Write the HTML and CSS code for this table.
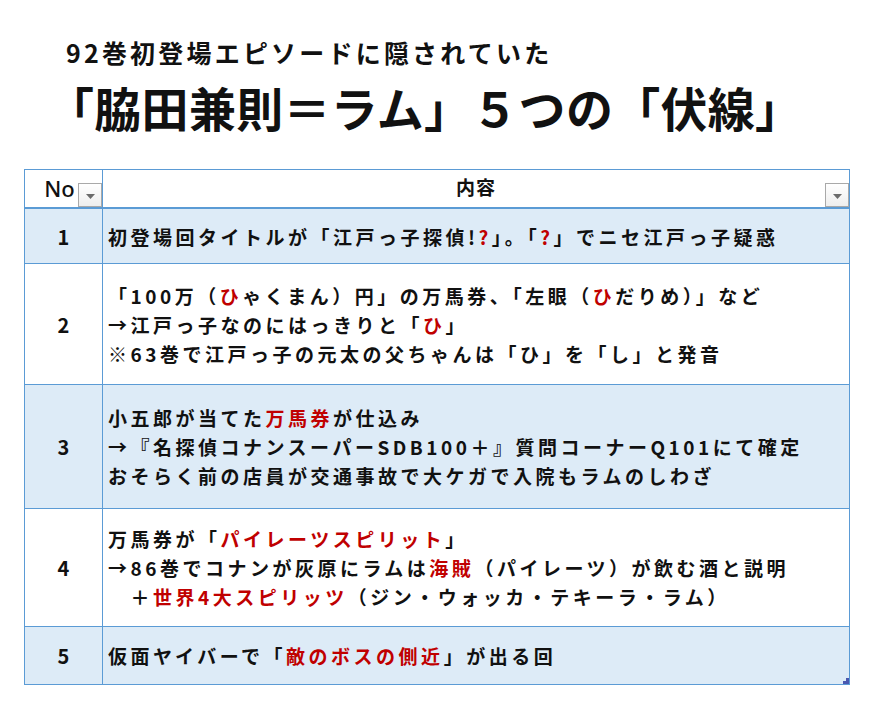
FILE: index.html
```html
<!DOCTYPE html>
<html lang="ja">
<head>
<meta charset="utf-8">
<link rel="stylesheet" href="styles.css">
</head>
<body>
<div class="page">
  <header class="titles">
    <div class="subtitle">92巻初登場エピソードに隠されていた</div>
    <h1 class="title">「脇田兼則＝ラム」５つの「伏線」</h1>
  </header>
  <div class="sheet">
    <table class="list">
      <thead>
        <tr class="head">
          <th class="c-no"><span class="no-label">No</span><span class="dd"><svg width="9" height="5" viewBox="0 0 9 5"><path d="M0 0H9L4.5 5Z" fill="#6b6b6b"/></svg></span></th>
          <th class="c-body"><span class="body-label">内容</span><span class="dd"><svg width="9" height="5" viewBox="0 0 9 5"><path d="M0 0H9L4.5 5Z" fill="#6b6b6b"/></svg></span></th>
        </tr>
      </thead>
      <tbody>
        <tr class="r1 alt">
          <td class="c-no">1</td>
          <td class="c-body">初登場回タイトルが「江戸っ子探偵!<span class="red">?</span>」。「<span class="red">?</span>」でニセ江戸っ子疑惑</td>
        </tr>
        <tr class="r2">
          <td class="c-no">2</td>
          <td class="c-body">「100万（<span class="red">ひ</span>ゃくまん）円」の万馬券、「左眼（<span class="red">ひ</span>だりめ）」など<br>→江戸っ子なのにはっきりと「<span class="red">ひ</span>」<br>※63巻で江戸っ子の元太の父ちゃんは「ひ」を「し」と発音</td>
        </tr>
        <tr class="r3 alt">
          <td class="c-no">3</td>
          <td class="c-body">小五郎が当てた<span class="red">万馬券</span>が仕込み<br>→『名探偵コナンスーパーSDB100＋』質問コーナーQ101にて確定<br>おそらく前の店員が交通事故で大ケガで入院もラムのしわざ</td>
        </tr>
        <tr class="r4">
          <td class="c-no">4</td>
          <td class="c-body">万馬券が「<span class="red">パイレーツスピリット</span>」<br>→86巻でコナンが灰原にラムは<span class="red">海賊</span>（パイレーツ）が飲む酒と説明<br>　＋<span class="red">世界4大スピリッツ</span>（ジン・ウォッカ・テキーラ・ラム）</td>
        </tr>
        <tr class="r5 alt">
          <td class="c-no">5</td>
          <td class="c-body">仮面ヤイバーで「<span class="red">敵のボスの側近</span>」が出る回</td>
        </tr>
      </tbody>
    </table>
    <svg class="grip" width="6" height="6" viewBox="0 0 6 6"><path d="M3 0H6V6H0V3H3Z" fill="#4a58b0"/></svg>
  </div>
</div>
</body>
</html>
```

FILE: styles.css
```css
html, body {
  margin: 0;
  padding: 0;
  background: #ffffff;
}

.page {
  width: 874px;
  height: 706px;
  font-family: "Noto Sans CJK JP", "Noto Sans", sans-serif;
  color: #111;
}

.titles {
  padding: 37px 0 0 66px;
  height: 169px;
  box-sizing: border-box;
}

.subtitle {
  font-size: 25px;
  font-weight: 700;
  line-height: 30px;
  letter-spacing: 3.2px;
}

.title {
  margin: 14px 0 0 -19px;
  font-size: 47px;
  font-weight: 700;
  line-height: 52px;
  letter-spacing: 0.3px;
}

.sheet {
  position: relative;
  margin-left: 24px;
  width: 826px;
}

.list {
  border-collapse: collapse;
  width: 826px;
  table-layout: fixed;
  font-size: 19px;
  font-weight: 700;
  letter-spacing: 3.5px;
}

.list td, .list th {
  border: 1px solid #5b9bd5;
  padding: 0;
  vertical-align: middle;
}

.c-no { width: 77px; text-align: center; }

.list td.c-no { font-size: 20px; font-weight: 600; letter-spacing: 0; }

.list td.c-body {
  padding-left: 5px;
  line-height: 29px;
  text-align: left;
  white-space: nowrap;
}

.head th {
  position: relative;
  height: 37px;
  background: #fff;
  border-bottom: 2px solid #5b9bd5;
  font-weight: 700;
}

.no-label {
  font-family: "Noto Sans", sans-serif;
  font-size: 22px;
  font-weight: 500;
  letter-spacing: 0;
  position: relative;
  left: -4px;
  top: -1px;
}

.body-label {
  font-size: 19px;
  letter-spacing: 1px;
  position: relative;
  top: -2px;
}

.dd {
  position: absolute;
  right: 0;
  bottom: 0;
  width: 22px;
  height: 22px;
  border: 1px solid #a9a9a9;
  background: linear-gradient(#ffffff, #eeeeee);
  display: flex;
  align-items: center;
  justify-content: center;
}

.dd svg { margin-top: 2px; }

.alt td { background: #ddebf7; }

.r1 td { height: 54px; }
.r2 td { height: 120px; }
.r3 td { height: 123px; }
.r4 td { height: 117px; }
.r5 td { height: 57px; }

.red { color: #c00000; }

.grip {
  position: absolute;
  right: 1px;
  bottom: 1px;
}
```
